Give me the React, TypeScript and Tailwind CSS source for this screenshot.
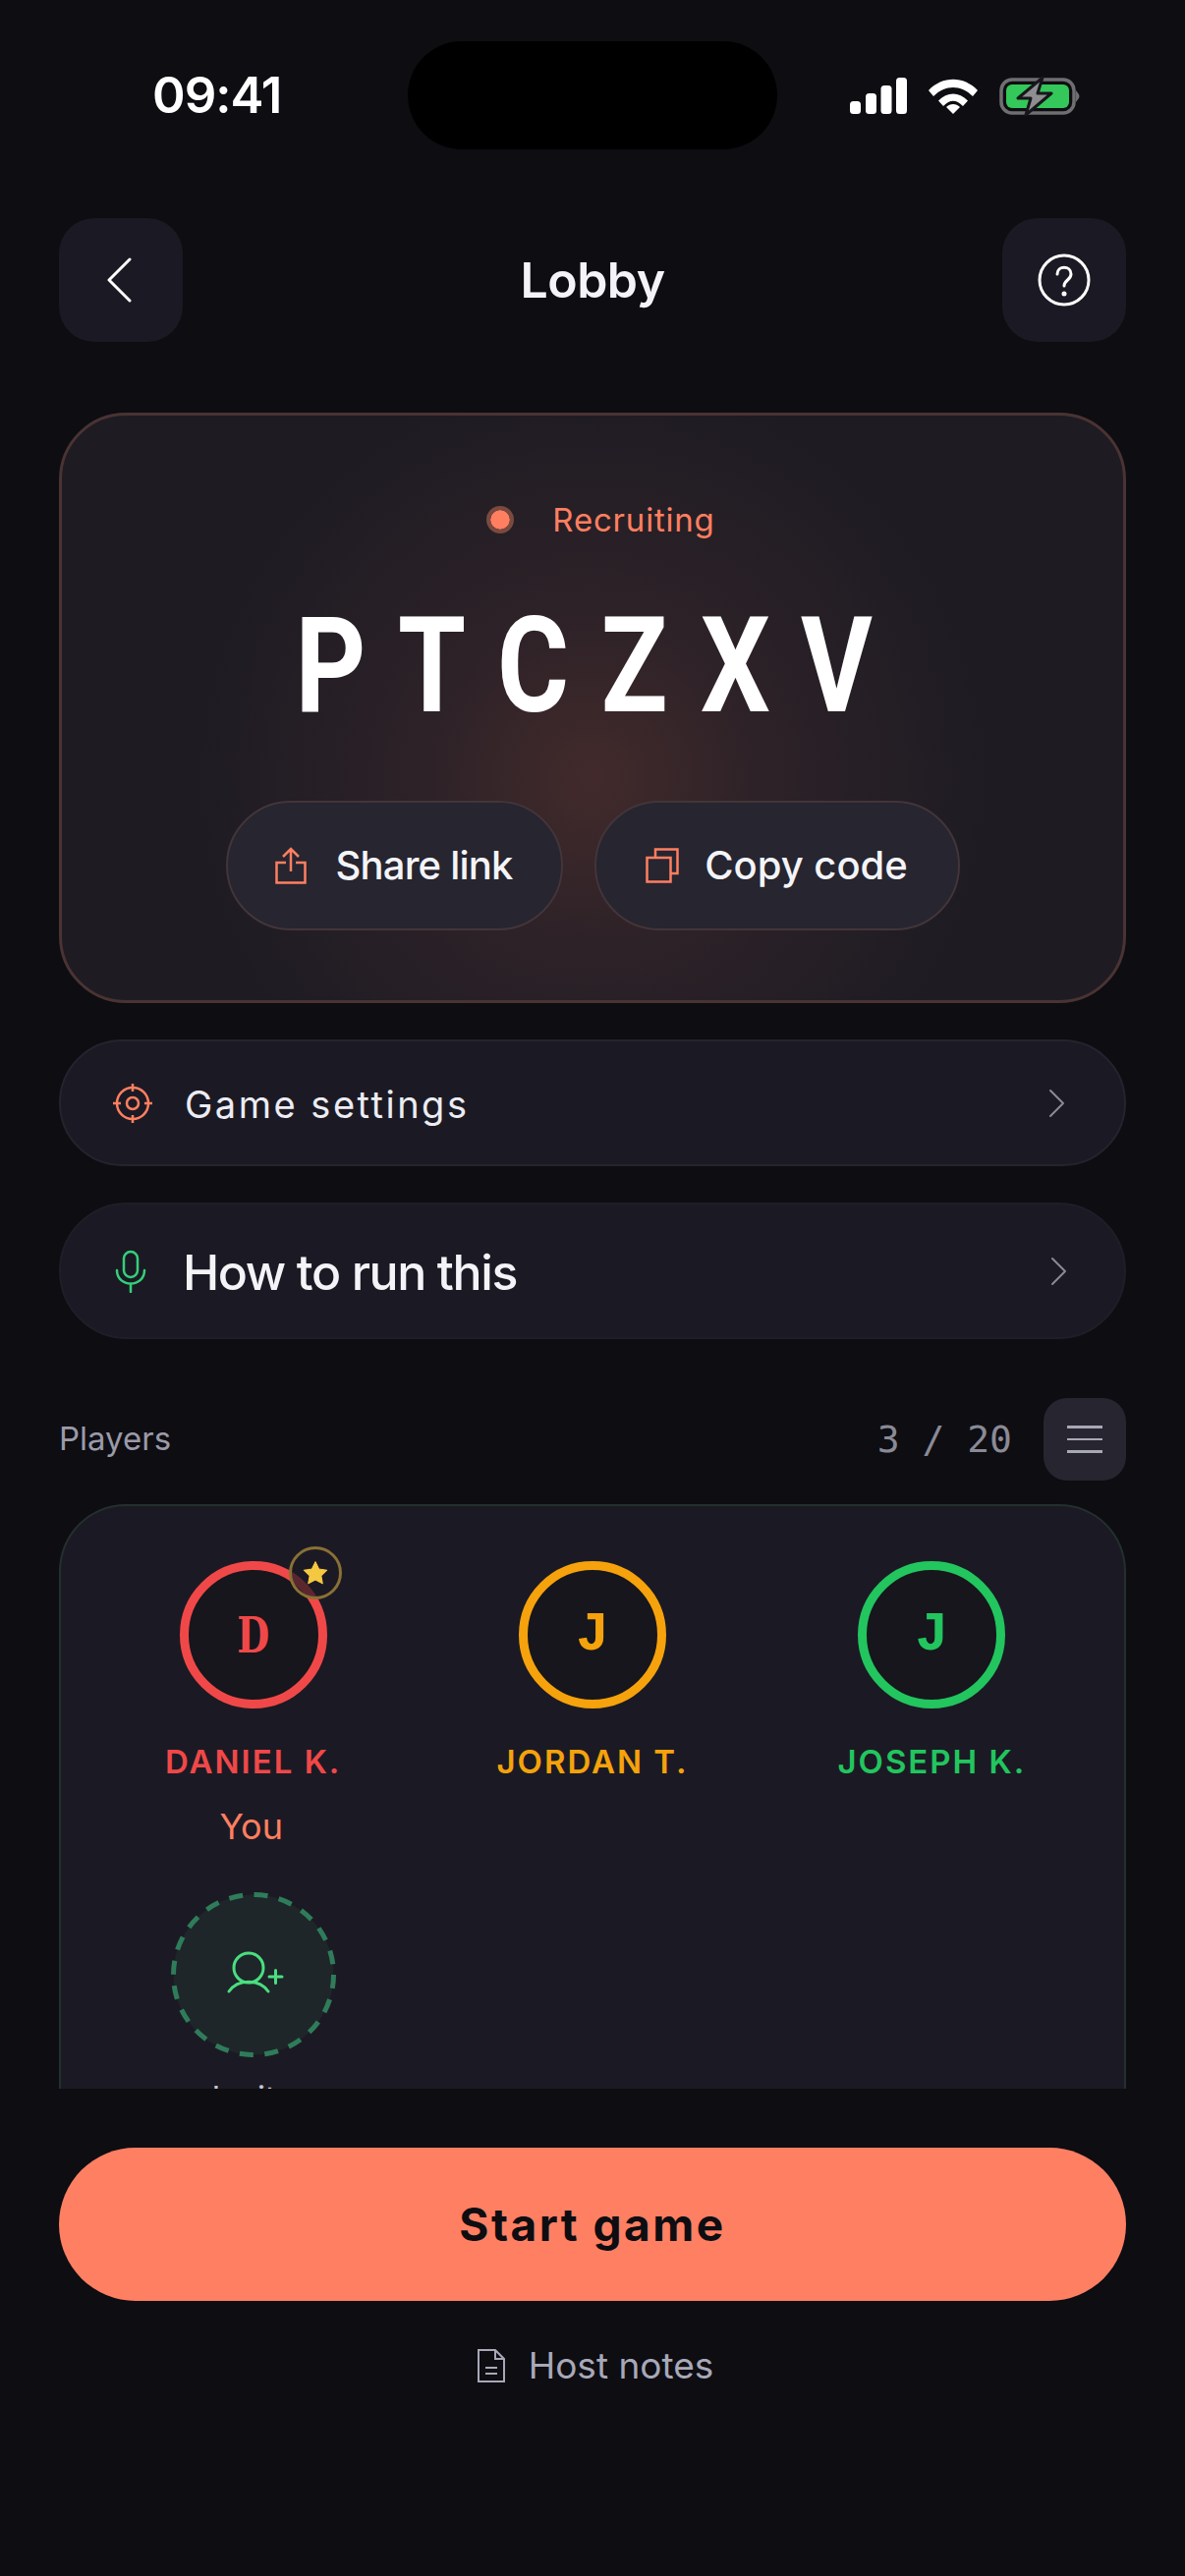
import React from "react";

const sans = "font-['Inter',sans-serif]";

const codeLetters = ["P", "T", "C", "Z", "X", "V"];

const players = [
  {
    initial: "D",
    name: "DANIEL K.",
    ring: "border-[#f04848]",
    text: "text-[#f04848]",
    font: "font-['DejaVu_Serif',serif] text-[50px] scale-x-[0.76]",
    host: true,
  },
  {
    initial: "J",
    name: "JORDAN T.",
    ring: "border-[#f5a20c]",
    text: "text-[#f5a20c]",
    font: "font-['Liberation_Mono',monospace] text-[56px]",
    host: false,
  },
  {
    initial: "J",
    name: "JOSEPH K.",
    ring: "border-[#22c55e]",
    text: "text-[#22c55e]",
    font: "font-['Liberation_Mono',monospace] text-[56px]",
    host: false,
  },
];

const StatusIcons = () => (
  <div className="flex items-center gap-[22px]">
    <svg width="58" height="38" viewBox="0 0 58 38" fill="#fff">
      <rect x="0" y="24" width="11" height="13" rx="3.500" />
      <rect x="16" y="16" width="11" height="21" rx="3.500" />
      <rect x="31.500" y="8" width="11" height="29" rx="3.500" />
      <rect x="47" y="0" width="11" height="37" rx="3.500" />
    </svg>
    <svg width="50" height="36" viewBox="0 0 50 36" fill="#fff">
      <path d="M0 12 C14 -3 36 -3 50 12 L45 18 C33 6 17 6 5 18 Z" />
      <path d="M10 22.500 C19 13 31 13 40 22.500 L35 28 C28 21 22 21 15 28 Z" />
      <path d="M18 29 C22 25 28 25 32 29 L25 36 Z" />
    </svg>
    <svg width="82" height="40" viewBox="0 0 82 40">
      <rect x="2" y="3" width="74" height="34" rx="11" fill="none" stroke="#6f6f72" strokeWidth="3.500" />
      <rect x="7" y="8" width="64" height="24" rx="6" fill="#34c759" />
      <path d="M78 14 L81 18 Q82 20 81 22 L78 26 Z" fill="#6f6f72" />
      <path d="M44 1 L19 22 H32 L27 39 L53 17 H39 Z" fill="#8e8e90" stroke="#16161c" strokeWidth="3" strokeLinejoin="round" />
    </svg>
  </div>
);

const Chevron = () => (
  <svg width="17" height="30" viewBox="0 0 17 30" fill="none" stroke="#8a8a96" strokeWidth="2" strokeLinecap="round" strokeLinejoin="round">
    <path d="M2 2 L15 15 L2 28" />
  </svg>
);

const App = () => {
  return (
    <div className={`flex h-[2622px] w-[1206px] flex-col overflow-hidden bg-[#0d0d12] ${sans}`}>
      {/* status bar */}
      <div className="relative flex h-[152px] shrink-0 items-end justify-between pl-[155px] pr-[107px]">
        <span className="mb-[25px] text-[51px] leading-[60px] font-semibold tracking-[-1px] text-white">09:41</span>
        <div className="absolute top-[42px] left-[415px] h-[110px] w-[376px] rounded-[55px] bg-black" />
        <div className="mb-[34px]">
          <StatusIcons />
        </div>
      </div>

      <div className="flex shrink-0 items-center justify-between px-[60px] pt-[70px]">
        <button className="flex h-[126px] w-[126px] items-center justify-center rounded-[36px] bg-[#1b1a24]">
          <svg width="30" height="46" viewBox="0 0 30 46" fill="none" stroke="#fff" strokeWidth="3" strokeLinecap="round" strokeLinejoin="round">
            <path d="M24 2 L3 23 L24 44" />
          </svg>
        </button>
        <h1 className="text-[50px] font-semibold tracking-[-0.5px] text-[#f4f4f8]">Lobby</h1>
        <button className="flex h-[126px] w-[126px] items-center justify-center rounded-[36px] bg-[#1b1a24]">
          <svg width="54" height="54" viewBox="0 0 54 54" fill="none" stroke="#fff" strokeWidth="3" strokeLinecap="round">
            <circle cx="27" cy="27" r="25" />
            <path d="M20 21 C20 12 34 12 34 21 C34 27 27 27 27 33" />
            <circle cx="27" cy="41" r="1" fill="#fff" />
          </svg>
        </button>
      </div>

      {/* code card */}
      <div className="mx-[60px] mt-[72px] flex h-[601px] shrink-0 flex-col items-center rounded-[68px] border-[3px] border-[#4a3333] bg-[#1c1a22] bg-[radial-gradient(circle_at_50%_62%,#422a2b_0%,#2d2228_26%,#1e1b23_62%)] pt-[88px]">
        <div className="flex h-[36px] items-center pl-[17px]">
          <span className="h-[28px] w-[28px] rounded-full border-[4px] border-[#7a4a40] bg-[#ff7f60] bg-clip-padding" />
          <span className="ml-[39px] text-[33px] leading-none tracking-[0.8px] text-[#ff7f60]">Recruiting</span>
        </div>
        <div className="mt-[71px] flex h-[120px] items-center pr-[18px] font-['Roboto',sans-serif] text-[136px] font-bold text-white">
          {codeLetters.map((c) => (
            <span key={c} className="w-[103px] scale-x-[0.82] text-center">
              {c}
            </span>
          ))}
        </div>
        <div className="mt-[77px] flex gap-[32px]">
          <button className="flex h-[132px] w-[343px] items-center justify-center gap-[29px] rounded-full border-2 border-[#433539] bg-[#262530]">
            <svg width="32" height="38" viewBox="0 0 32 38" fill="none" stroke="#ff7f60" strokeWidth="2.500">
              <path d="M11 16 H1.500 V36.500 H30.500 V16 H21" />
              <path d="M16 25 V2 M8 10 L16 2 L24 10" />
            </svg>
            <span className="text-[40px] font-medium tracking-[-0.8px] text-[#f4f4f8]">Share link</span>
          </button>
          <button className="flex h-[132px] w-[372px] items-center justify-center gap-[26px] rounded-full border-2 border-[#433539] bg-[#262530]">
            <svg width="34" height="36" viewBox="0 0 34 36" fill="none" stroke="#ff7f60" strokeWidth="2.500">
              <rect x="1.500" y="10" width="24" height="24.500" />
              <path d="M10 10 V1.500 H32.500 V26 H25.500" />
            </svg>
            <span className="text-[40px] font-medium text-[#f4f4f8]">Copy code</span>
          </button>
        </div>
      </div>

      {/* rows */}
      <div className="mx-[60px] mt-[37px] flex h-[129px] shrink-0 items-center justify-between rounded-full border-2 border-[#24242e] bg-[#1b1a24] pl-[52px] pr-[60px]">
        <div className="flex items-center gap-[32px]">
          <svg width="42" height="42" viewBox="0 0 42 42" fill="none" stroke="#ff7f60" strokeWidth="2.500">
            <circle cx="21" cy="21" r="16" />
            <circle cx="21" cy="21" r="6" />
            <path d="M21 1 V9 M21 33 V41 M1 21 H9 M33 21 H41" />
          </svg>
          <span className="pt-[3px] text-[38px] tracking-[2.5px] text-[#ececf2]">Game settings</span>
        </div>
        <Chevron />
      </div>

      <div className="mx-[60px] mt-[37px] flex h-[139px] shrink-0 items-center justify-between rounded-full border-2 border-[#1e1e28] bg-[#1b1a24] pl-[55px] pr-[58px]">
        <div className="flex items-center gap-[37px]">
          <svg width="32" height="44" viewBox="0 0 32 44" fill="none" stroke="#34d07a" strokeWidth="2.500" strokeLinecap="round">
            <rect x="9" y="2" width="14" height="26" rx="7" />
            <path d="M2 21 C2 39 30 39 30 21 M16 35 V43" />
          </svg>
          <span className="pt-[3px] text-[50px] font-medium tracking-[-1.4px] text-[#f4f4f8]">How to run this</span>
        </div>
        <Chevron />
      </div>

      {/* players */}
      <div className="mx-[60px] mt-[60px] flex h-[84px] shrink-0 items-center justify-between">
        <span className="text-[33px] text-[#9a9aa8]">Players</span>
        <div className="flex items-center gap-[32px]">
          <span className="font-['DejaVu_Sans_Mono',monospace] text-[38px] whitespace-pre text-[#8a8a96]">3 / 20</span>
          <button className="flex h-[84px] w-[84px] flex-col items-center justify-center gap-[10px] rounded-[24px] bg-[#262530]">
            <span className="h-[2.500px] w-[36px] bg-[#a8a8b4]" />
            <span className="h-[2.500px] w-[36px] bg-[#a8a8b4]" />
            <span className="h-[2.500px] w-[36px] bg-[#a8a8b4]" />
          </button>
        </div>
      </div>

      <div className="mx-[60px] mt-[24px] h-[595px] shrink-0 overflow-hidden rounded-t-[68px] border-x-2 border-t-2 border-[#24302e] bg-[#1b1a24] pt-[56px]">
        <div className="grid grid-cols-3 px-[23px]">
          {players.map((p) => (
            <div key={p.name} className="flex flex-col items-center">
              <div className={`relative flex h-[150px] w-[150px] items-center justify-center rounded-full border-[9px] ${p.ring} bg-[#16161c]`}>
                <span className={`font-bold ${p.font} ${p.text}`}>{p.initial}</span>
                {p.host && (
                  <div className="absolute -top-[24px] -right-[24px] flex h-[54px] w-[54px] items-center justify-center rounded-full border-[3px] border-[#8a7035] bg-[#1b1a24]/70">
                    <svg width="26" height="26" viewBox="0 0 24 24" fill="#f5c842">
                      <path d="M12 1.500 L15.300 8.300 L22.800 9.400 L17.400 14.600 L18.700 22 L12 18.500 L5.300 22 L6.600 14.600 L1.200 9.400 L8.700 8.300 Z" stroke="#f5c842" strokeWidth="1" strokeLinejoin="round" />
                    </svg>
                  </div>
                )}
              </div>
              <span className={`mt-[38px] text-[33px] leading-[32px] font-semibold tracking-[2px] ${p.text}`}>{p.name}</span>
              {p.host && <span className="mt-[32px] mr-[4px] text-[36px] leading-[36px] text-[#ff7f60]">You</span>}
            </div>
          ))}
          <div className="mt-[49px] flex flex-col items-center">
            <svg width="168" height="168" viewBox="0 0 168 168">
              <circle cx="84" cy="84" r="81.500" fill="#1e2629" stroke="#2f7c5a" strokeWidth="5" strokeDasharray="14 11.600" />
              <g fill="none" stroke="#4ade80" strokeWidth="3" strokeLinecap="round">
                <circle cx="79" cy="77" r="15" />
                <path d="M59 101 C68 88 90 88 99 101" />
                <path d="M100 86 H113 M106.500 79.500 V92.500" />
              </g>
            </svg>
            <span className="mt-[25px] text-[33px] leading-none text-[#c8c8d0]">Invite</span>
          </div>
        </div>
      </div>

      {/* footer */}
      <button className="mx-[60px] mt-[60px] flex h-[156px] shrink-0 items-center justify-center rounded-full bg-[#ff7f62] text-[46px] font-bold tracking-[2.5px] text-[#0d0d12]">
        Start game
      </button>
      <div className="mt-[38px] flex items-center justify-center gap-[24px] pl-[6px]">
        <svg width="28" height="34" viewBox="0 0 28 34" fill="none" stroke="#a8a8b8" strokeWidth="2">
          <path d="M1 1 H18 L27 10 V33 H1 Z M18 1 V10 H27" />
          <path d="M8 19 H20 M8 25 H20" />
        </svg>
        <span className="text-[37px] text-[#a8a8b8]">Host notes</span>
      </div>
    </div>
  );
};

export default App;
